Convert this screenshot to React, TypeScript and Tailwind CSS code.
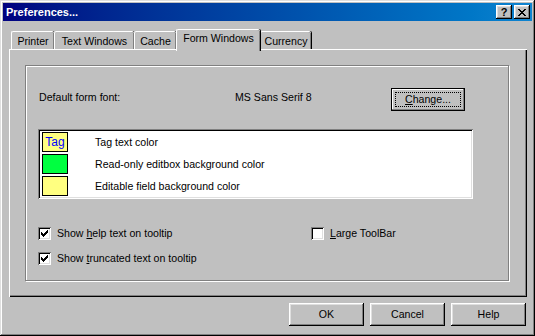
import React from "react";

const raised =
  "shadow-[inset_-1px_-1px_#000,inset_1px_1px_#fff,inset_-2px_-2px_#808080,inset_2px_2px_#dfdfdf]";
const sunken =
  "shadow-[inset_1px_1px_#808080,inset_-1px_-1px_#fff,inset_2px_2px_#000,inset_-2px_-2px_#dfdfdf]";

function CheckMark() {
  const px: [number, number][] = [
    [6, 0],
    [5, 1], [6, 1],
    [0, 2], [4, 2], [5, 2], [6, 2],
    [0, 3], [1, 3], [3, 3], [4, 3], [5, 3],
    [0, 4], [1, 4], [2, 4], [3, 4], [4, 4],
    [1, 5], [2, 5], [3, 5],
    [2, 6],
  ];
  return (
    <svg width="7" height="7" viewBox="0 0 7 7" shapeRendering="crispEdges">
      {px.map(([x, y], i) => (
        <rect key={i} x={x} y={y} width="1" height="1" fill="#000" />
      ))}
    </svg>
  );
}

function CheckBox({ checked }: { checked: boolean }) {
  return (
    <div className={`w-[13px] h-[13px] bg-white flex items-center justify-center shrink-0 ${sunken}`}>
      {checked && <CheckMark />}
    </div>
  );
}

function CloseGlyph() {
  const rows = ["##....##", ".##..##.", "..####..", "...##...", "..####..", ".##..##.", "##....##"];
  return (
    <svg width="8" height="7" viewBox="0 0 8 7" shapeRendering="crispEdges">
      {rows.flatMap((r, y) =>
        r.split("").map((c, x) =>
          c === "#" ? <rect key={`${x}-${y}`} x={x} y={y} width="1" height="1" fill="#000" /> : null
        )
      )}
    </svg>
  );
}

function Tab({ label, w, selected }: { label: string; w: string; selected?: boolean }) {
  return (
    <div
      className={`${w} ${
        selected ? "h-[22px] -mb-[2px] relative z-10 pb-[4px]" : "h-[18px] pt-[1px]"
      } bg-[#c0c0c0] flex items-center justify-center rounded-t-[2px] border-t border-l border-white shadow-[inset_-1px_0_#808080,1px_0_#000]`}
    >
      {label}
    </div>
  );
}

function Btn({ children, def }: { children: React.ReactNode; def?: boolean }) {
  if (def) {
    return (
      <div className="w-[74px] h-[23px] border border-black bg-[#c0c0c0]">
        <div className="w-full h-full p-[3px] shadow-[inset_-1px_-1px_#808080,inset_1px_1px_#fff]">
          <div className="w-full h-full border border-dotted border-black flex items-center justify-center">
            {children}
          </div>
        </div>
      </div>
    );
  }
  return (
    <div className={`w-[75px] h-[23px] bg-[#c0c0c0] flex items-center justify-center ${raised}`}>
      {children}
    </div>
  );
}

export default function App() {
  return (
    <div
      className={`w-[535px] h-[336px] bg-[#c0c0c0] p-[3px] flex flex-col text-[10.6px] leading-none text-black font-['Liberation_Sans',Arial,sans-serif] shadow-[inset_-1px_-1px_#000,inset_1px_1px_#dfdfdf,inset_-2px_-2px_#808080,inset_2px_2px_#fff]`}
    >
      {/* title bar */}
      <div className="h-[18px] flex items-center bg-gradient-to-r from-[#000080] to-[#1084d0] pl-[3px] pr-[2px]">
        <span className="text-white font-bold text-[11px] flex-1">Preferences...</span>
        <div className={`w-[16px] h-[14px] bg-[#c0c0c0] flex items-center justify-center font-bold text-[11px] ${raised}`}>
          ?
        </div>
        <div className={`w-[16px] h-[14px] ml-[2px] bg-[#c0c0c0] flex items-center justify-center ${raised}`}>
          <CloseGlyph />
        </div>
      </div>

      {/* tabs */}
      <div className="mt-[8px] h-[20px] ml-[8px] flex items-end">
        <Tab label="Printer" w="w-[43px]" />
        <Tab label="Text Windows" w="w-[80px]" />
        <Tab label="Cache" w="w-[42px]" />
        <Tab label="Form Windows" w="w-[84px]" selected />
        <Tab label="Currency" w="w-[51px]" />
      </div>

      {/* panel */}
      <div className="ml-[6px] w-[518px] h-[248px] pt-[16px] pl-[16px] shadow-[inset_1px_1px_#fff,inset_-1px_-1px_#000,inset_-2px_-2px_#808080]">
        <div className="w-[484px] h-[216px] border border-[#808080] shadow-[inset_1px_1px_#fff,1px_1px_#fff] pl-[12px] flex flex-col">
          <div className="mt-[22px] h-[23px] flex items-center">
            <span className="w-[197px] pl-[1px] mb-[4px]">Default form font:</span>
            <span className="w-[156px] mb-[4px]">MS Sans Serif 8</span>
            <Btn def>
              <span>
                <u>C</u>hange...
              </span>
            </Btn>
          </div>

          <div className={`mt-[18px] w-[435px] h-[70px] bg-white p-[2px] ${sunken}`}>
            {[
              { bg: "bg-[#ffff80]", tag: true, label: "Tag text color" },
              { bg: "bg-[#00ff40]", tag: false, label: "Read-only editbox background color" },
              { bg: "bg-[#ffff80]", tag: false, label: "Editable field background color" },
            ].map((r, i) => (
              <div key={i} className="h-[22px] flex items-center pl-[2px]">
                <div
                  className={`w-[26px] h-[20px] border border-black ${r.bg} flex items-center justify-center text-[#0000ff] text-[12px]`}
                >
                  {r.tag ? "Tag" : ""}
                </div>
                <span className="ml-[27px]">{r.label}</span>
              </div>
            ))}
          </div>

          <div className="mt-[28px] flex items-center h-[13px]">
            <div className="w-[273px] flex items-center">
              <CheckBox checked />
              <span className="ml-[6px]">
                Show <u>h</u>elp text on tooltip
              </span>
            </div>
            <CheckBox checked={false} />
            <span className="ml-[6px]">
              <u>L</u>arge ToolBar
            </span>
          </div>
          <div className="mt-[12px] flex items-center h-[13px]">
            <CheckBox checked />
            <span className="ml-[6px]">
              Show <u>t</u>runcated text on tooltip
            </span>
          </div>
        </div>
      </div>

      {/* buttons */}
      <div className="mt-[6px] flex justify-end gap-[6px] pr-[6px]">
        <Btn>OK</Btn>
        <Btn>Cancel</Btn>
        <Btn>Help</Btn>
      </div>
    </div>
  );
}
